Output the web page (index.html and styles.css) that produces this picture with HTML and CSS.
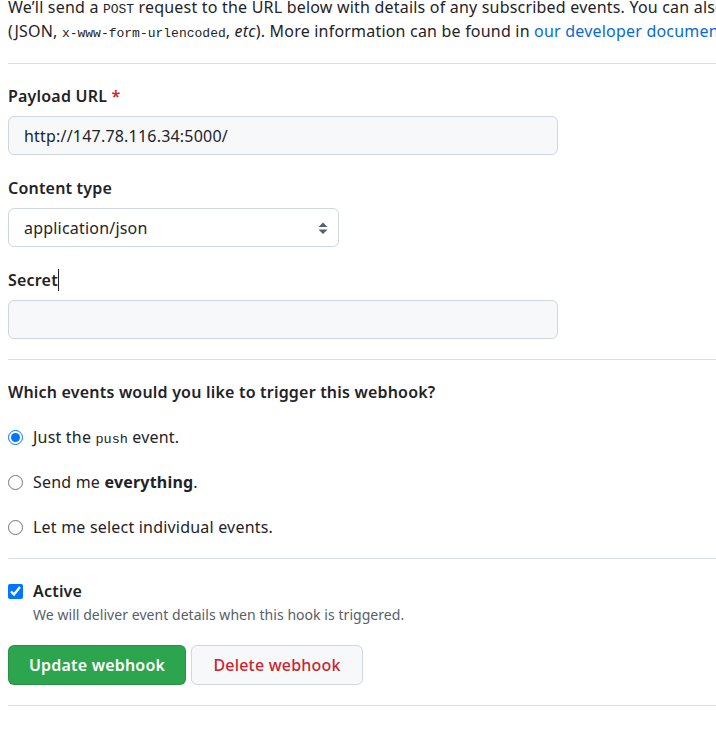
FILE: index.html
```html
<!DOCTYPE html>
<html>
<head>
<meta charset="utf-8">
<link rel="stylesheet" href="styles.css">
</head>
<body>
<div class="page">
  <p class="intro"><span class="intro-line">We’ll send a <code>POST</code> request to the URL below with details of any subscribed events. You can also specify which data format you’d like to receive</span><span class="intro-line">(JSON, <code>x-www-form-urlencoded</code>, <em>etc</em>). More information can be found in <a href="#">our developer documentation</a>.</span></p>
  <hr class="rule">
  <div class="fields">
    <div class="field">
      <label class="label">Payload URL <span class="req">*</span></label>
      <input class="input url" type="text" value="http://147.78.116.34:5000/">
    </div>
    <div class="field">
      <label class="label">Content type</label>
      <div class="select-wrap">
        <select class="select"><option>application/json</option></select>
        <svg class="select-icon" width="10" height="16" viewBox="0 0 10 16"><path d="M5 2.5 L9.5 7 H0.5 Z M5 14 L9.5 9.5 H0.5 Z" fill="#57606a"/></svg>
      </div>
    </div>
    <div class="field">
      <label class="label">Secret<span class="caret"></span></label>
      <input class="input url" type="text" value="">
    </div>
  </div>
  <hr class="rule">
  <h3 class="question">Which events would you like to trigger this webhook?</h3>
  <div class="choices">
    <label class="choice"><input type="radio" name="ev" checked><span>Just the <code class="code-lg">push</code> event.</span></label>
    <label class="choice"><input type="radio" name="ev"><span>Send me <strong>everything</strong>.</span></label>
    <label class="choice"><input type="radio" name="ev"><span>Let me select individual events.</span></label>
  </div>
  <hr class="rule rule-tight">
  <div class="active">
    <label class="active-row"><input type="checkbox" checked><span class="active-title">Active</span></label>
    <p class="note">We will deliver event details when this hook is triggered.</p>
  </div>
  <div class="actions">
    <button class="btn btn-primary">Update webhook</button>
    <button class="btn btn-danger">Delete webhook</button>
  </div>
  <hr class="rule">
</div>
</body>
</html>
```
FILE: styles.css
```css
html, body {
  margin: 0;
  padding: 0;
  background: #fff;
  overflow: hidden;
}
body {
  font-family: "Noto Sans", "Open Sans", sans-serif;
  font-size: 16px;
  line-height: 24px;
  letter-spacing: 0.2px;
  color: #1f2328;
}
.page {
  padding-left: 8px;
}
.intro {
  margin: -5px 0 0 0;
  overflow: hidden;
}
.intro-line {
  display: block;
  white-space: nowrap;
}
code {
  font-family: "Liberation Mono", "DejaVu Sans Mono", monospace;
  font-size: 13px;
  line-height: 1;
  letter-spacing: 0;
}
.code-lg {
  font-size: 13.5px;
}
a {
  color: #0969da;
  text-decoration: none;
}
.rule {
  border: 0;
  height: 1px;
  background: #d8dee4;
  margin: 20px 0 20px 0;
}
.rule-tight {
  margin-top: 19px;
}
.fields {
  display: flex;
  flex-direction: column;
  gap: 21px;
}
.label {
  display: block;
  font-weight: 600;
  margin-bottom: 8px;
}
.req { color: #cf222e; }
.caret {
  display: inline-block;
  width: 1px;
  height: 22px;
  background: #1f2328;
  vertical-align: -5px;
}
.input {
  box-sizing: border-box;
  display: block;
  width: 550px;
  height: 39px;
  padding: 0 15px;
  font-family: inherit;
  font-size: 16px;
  letter-spacing: 0.2px;
  color: #1f2328;
  background: #f6f8fa;
  border: 1px solid #d0d7de;
  border-radius: 6px;
  outline: none;
}
.select-wrap {
  position: relative;
  width: 331px;
}
.select {
  box-sizing: border-box;
  appearance: none;
  -webkit-appearance: none;
  display: block;
  width: 331px;
  height: 39px;
  padding: 0 15px;
  font-family: inherit;
  font-size: 16px;
  letter-spacing: 0.2px;
  color: #1f2328;
  background: #fff;
  border: 1px solid #d0d7de;
  border-radius: 6px;
}
.select-icon {
  position: absolute;
  right: 11px;
  top: 12px;
}
.question {
  margin: 0;
  font-size: 16px;
  font-weight: 600;
}
.choices {
  display: flex;
  flex-direction: column;
  gap: 21px;
  margin-top: 21px;
}
.choice {
  display: flex;
  align-items: center;
  gap: 10px;
  height: 24px;
}
.choice input,
.active-row input {
  margin: 0;
  width: 15px;
  height: 15px;
}
.active-row {
  display: flex;
  align-items: center;
  gap: 10px;
  font-weight: 600;
}
.note {
  margin: 0 0 0 25px;
  font-size: 14px;
  line-height: 24px;
  letter-spacing: 0.05px;
  color: #57606a;
}
.actions {
  display: flex;
  gap: 5px;
  margin-top: 18px;
}
.btn {
  box-sizing: border-box;
  height: 40px;
  padding: 0;
  font-family: inherit;
  font-size: 16px;
  letter-spacing: 0.2px;
  font-weight: 600;
  border-radius: 6px;
  border: 1px solid;
  cursor: pointer;
}
.btn-primary {
  width: 178px;
  color: #fff;
  background: #2da44e;
  border-color: rgba(27, 31, 36, 0.15);
}
.btn-danger {
  width: 172px;
  color: #cf222e;
  background: #f6f8fa;
  border-color: #d0d7de;
  font-weight: 500;
}
```
